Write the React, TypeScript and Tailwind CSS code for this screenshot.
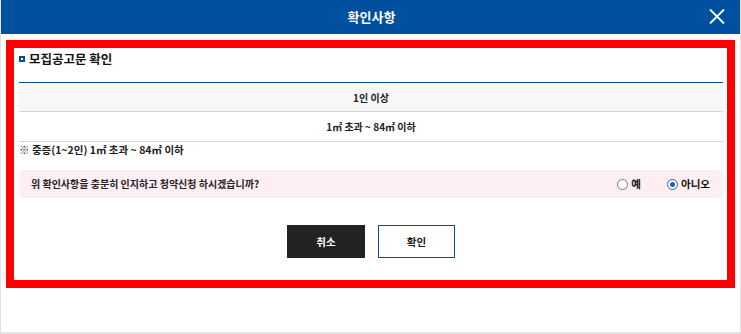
import React from "react";

const font = { fontFamily: '"Noto Sans CJK KR", "Noto Sans", sans-serif' };

function Radio({ checked, label }: { checked: boolean; label: string }) {
  return (
    <label className="flex items-center gap-[3px]">
      <span
        className={
          checked
            ? "flex h-[11px] w-[11px] items-center justify-center rounded-full border border-[#1d5fae] bg-white"
            : "flex h-[11px] w-[11px] items-center justify-center rounded-full border border-[#767676] bg-white"
        }
      >
        {checked && <span className="h-[5px] w-[5px] rounded-full bg-[#1d5fae]" />}
      </span>
      <span className="text-[10.5px] font-bold leading-[14px] text-[#111]">{label}</span>
    </label>
  );
}

export default function App() {
  return (
    <div className="h-[334px] w-[741px] bg-[#e3e3e3]" style={font}>
      <div className="ml-[1px] flex h-[332px] w-[739px] flex-col bg-white">
        <div className="relative flex h-[34px] items-center justify-center bg-[#0050a0]">
          <span className="pl-[2px] text-[13px] font-bold leading-[20px] text-white">확인사항</span>
          <svg
            className="absolute right-[15px] top-[9px]"
            width="16"
            height="15"
            viewBox="0 0 16 15"
            fill="none"
            stroke="white"
            strokeWidth="1.8"
          >
            <line x1="1" y1="0.5" x2="15" y2="14.5" />
            <line x1="15" y1="0.5" x2="1" y2="14.5" />
          </svg>
        </div>
        <div className="ml-[5px] mr-[5px] mt-[6px] h-[248px] border-8 border-[#ff0000] bg-white pl-[5px] pr-[4px] pt-[1px]">
          <div className="flex h-[20px] items-center gap-[4px]">
            <span className="h-[6px] w-[6px] border-[2px] border-[#0050a0] bg-white" />
            <span className="text-[12.5px] font-bold leading-[20px] text-[#111]">모집공고문 확인</span>
          </div>
          <div className="mt-[13px] border-t border-[#0050a0]">
            <div className="flex h-[29px] items-center justify-center border-b border-[#d6d6d6] bg-[#f7f7f7] text-[10px] font-bold text-[#222]">
              1인 이상
            </div>
            <div className="flex h-[30px] items-center justify-center border-b border-[#d6d6d6] text-[10px] font-bold text-[#222]">
              1㎡ 초과 ~ 84㎡ 이하
            </div>
          </div>
          <div className="h-[16px] text-[10.5px] font-bold leading-[16px] text-[#222]">
            ※ 중증(1~2인) 1㎡ 초과 ~ 84㎡ 이하
          </div>
          <div className="mt-[12px] flex h-[28px] items-center justify-between rounded-[6px] bg-[#fdeef3] pl-[12px] pr-[13px]">
            <span className="text-[10px] font-bold leading-[14px] text-[#222]">
              위 확인사항을 충분히 인지하고 청약신청 하시겠습니까?
            </span>
            <div className="flex items-center gap-[26px]">
              <Radio checked={false} label="예" />
              <Radio checked={true} label="아니오" />
            </div>
          </div>
          <div className="mt-[27px] flex justify-center gap-[13px]">
            <button className="flex h-[33px] w-[78px] items-center justify-center bg-[#222222] text-[10.5px] font-bold text-white">
              취소
            </button>
            <button className="flex h-[33px] w-[77px] items-center justify-center border border-[#0d4a8f] bg-white text-[10.5px] font-bold text-[#222]">
              확인
            </button>
          </div>
        </div>
      </div>
    </div>
  );
}
